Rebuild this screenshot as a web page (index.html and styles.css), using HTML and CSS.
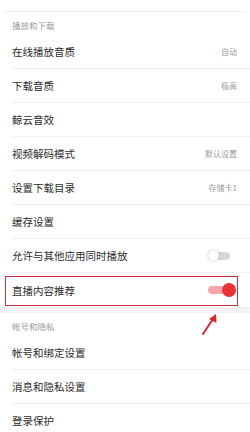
FILE: index.html
```html
<!DOCTYPE html>
<html lang="zh">
<head>
<meta charset="utf-8">
<link rel="stylesheet" href="styles.css">
</head>
<body>
<div class="page">
  <div class="top"></div>
  <div class="section-title">播放和下载</div>
  <div class="row"><span class="label">在线播放音质</span><span class="value">自动</span></div>
  <div class="row"><span class="label">下载音质</span><span class="value">极高</span></div>
  <div class="row"><span class="label">鲸云音效</span></div>
  <div class="row"><span class="label">视频解码模式</span><span class="value">默认设置</span></div>
  <div class="row"><span class="label">设置下载目录</span><span class="value">存储卡1</span></div>
  <div class="row"><span class="label">缓存设置</span></div>
  <div class="row"><span class="label">允许与其他应用同时播放</span><span class="switch off"><span class="knob"></span></span></div>
  <div class="row highlight last"><span class="label">直播内容推荐</span><span class="switch on"><span class="knob"></span></span></div>
  <div class="band"></div>
  <div class="section-title">帐号和隐私</div>
  <div class="row"><span class="label">帐号和绑定设置</span></div>
  <div class="row"><span class="label">消息和隐私设置</span></div>
  <div class="row"><span class="label">登录保护</span></div>
  <svg class="arrow" width="24" height="26" viewBox="0 0 24 26">
    <line x1="4" y1="22" x2="14" y2="7" stroke="#d02a2e" stroke-width="2" stroke-linecap="round"/>
    <polygon points="17,2 17.5,11 10,7" fill="#d02a2e"/>
  </svg>
</div>
</body>
</html>
```
FILE: styles.css
```css
html, body {
  margin: 0;
  padding: 0;
  background: #ffffff;
}
.page {
  position: relative;
  width: 250px;
  height: 432px;
  overflow: hidden;
  font-family: "Noto Sans CJK SC", "Noto Sans", sans-serif;
  background: #ffffff;
}
.top {
  height: 11px;
  border-bottom: 1px solid #f0f0f0;
  margin-left: 4px;
  margin-right: 4px;
}
.section-title {
  height: 23px;
  padding-left: 12px;
  padding-top: 7px;
  box-sizing: border-box;
  font-size: 8.5px;
  line-height: 12px;
  color: #9a9a9a;
}
.row {
  position: relative;
  display: flex;
  align-items: center;
  justify-content: space-between;
  height: 34px;
  box-sizing: border-box;
  margin-left: 12px;
  padding-right: 13px;
  border-bottom: 1px solid #f1f1f1;
}
.row.last {
  border-bottom: none;
}
.label {
  font-size: 10.5px;
  color: #2b2b2b;
}
.value {
  font-size: 8px;
  color: #9a9a9a;
}
.switch {
  position: relative;
  width: 22px;
  height: 8px;
  border-radius: 4px;
}
.switch.off {
  background: #d6d6d6;
  margin-right: 7px;
}
.switch.off .knob {
  position: absolute;
  left: 0;
  top: -2px;
  width: 11px;
  height: 11px;
  border-radius: 50%;
  background: #ffffff;
  box-shadow: 0 0 2px rgba(0,0,0,0.3);
}
.switch.on {
  background: #f6a5aa;
  margin-right: 7px;
}
.switch.on .knob {
  position: absolute;
  right: -6px;
  top: -3px;
  width: 14px;
  height: 14px;
  border-radius: 50%;
  background: #ec3138;
}
.highlight::after {
  content: "";
  position: absolute;
  left: -7px;
  right: 12px;
  top: 3px;
  bottom: 1px;
  border: 1px solid #c9303d;
}
.band {
  height: 6px;
  background: #f3f3f3;
}
.arrow {
  position: absolute;
  left: 199px;
  top: 312px;
}
```
